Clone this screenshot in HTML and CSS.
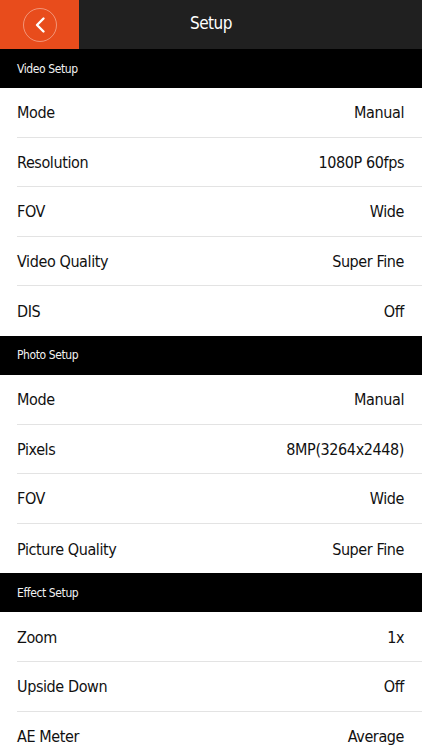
FILE: index.html
```html
<!DOCTYPE html>
<html lang="en">
<head>
<meta charset="utf-8">
<title>Setup</title>
<link rel="stylesheet" href="styles.css">
</head>
<body>
<div class="app">
  <header class="topbar">
    <button class="back" aria-label="Back">
      <svg width="36" height="36" viewBox="0 0 36 36">
        <circle cx="18" cy="18" r="16.5" fill="none" stroke="rgba(255,255,255,0.4)" stroke-width="1"/>
        <path d="M21.5 11.5 L15 18 L21.5 24.5" fill="none" stroke="#fff" stroke-width="2.4" stroke-linecap="round" stroke-linejoin="round"/>
      </svg>
    </button>
    <h1 class="title">Setup</h1>
    <div class="spacer"></div>
  </header>

  <div class="section">Video Setup</div>
  <div class="row"><span>Mode</span><span>Manual</span></div>
  <div class="row"><span>Resolution</span><span>1080P 60fps</span></div>
  <div class="row"><span>FOV</span><span>Wide</span></div>
  <div class="row"><span>Video Quality</span><span>Super Fine</span></div>
  <div class="row last"><span>DIS</span><span>Off</span></div>

  <div class="section">Photo Setup</div>
  <div class="row"><span>Mode</span><span>Manual</span></div>
  <div class="row"><span>Pixels</span><span>8MP(3264x2448)</span></div>
  <div class="row"><span>FOV</span><span>Wide</span></div>
  <div class="row last"><span>Picture Quality</span><span>Super Fine</span></div>

  <div class="section">Effect Setup</div>
  <div class="row"><span>Zoom</span><span>1x</span></div>
  <div class="row"><span>Upside Down</span><span>Off</span></div>
  <div class="row"><span>AE Meter</span><span>Average</span></div>
</div>
</body>
</html>
```
FILE: styles.css
```css
* { box-sizing: border-box; }
html, body { margin: 0; padding: 0; background: #fff; }
body {
  font-family: "Liberation Sans Narrow", "DejaVu Sans Condensed", "Liberation Sans", sans-serif;
  color: #111;
  overflow: hidden;
}
.app { width: 422px; }
.topbar {
  height: 49px;
  background: #202020;
  display: flex;
  align-items: stretch;
}
.back {
  width: 79px;
  border: 0;
  padding: 0;
  margin: 0;
  background: #e84c1c;
  display: flex;
  align-items: center;
  justify-content: center;
}
.back svg { display: block; margin-top: 1px; }
.title {
  flex: 1;
  margin: 0;
  color: #fff;
  font-size: 17px;
  letter-spacing: -0.5px;
  font-weight: normal;
  text-align: center;
  line-height: 47px;
}
.spacer { width: 79px; }
.section {
  height: 39px;
  background: #000;
  color: #f2f2f2;
  font-size: 12px;
  letter-spacing: -0.4px;
  padding-left: 17px;
  display: flex;
  align-items: center;
}
.row {
  height: 49.6px;
  margin-left: 17px;
  padding-right: 18px;
  border-bottom: 1px solid #e3e3e3;
  display: flex;
  align-items: center;
  justify-content: space-between;
  font-size: 16px;
  letter-spacing: -0.4px;
  padding-top: 1px;
}
.row.last { border-bottom: 0; }
```
